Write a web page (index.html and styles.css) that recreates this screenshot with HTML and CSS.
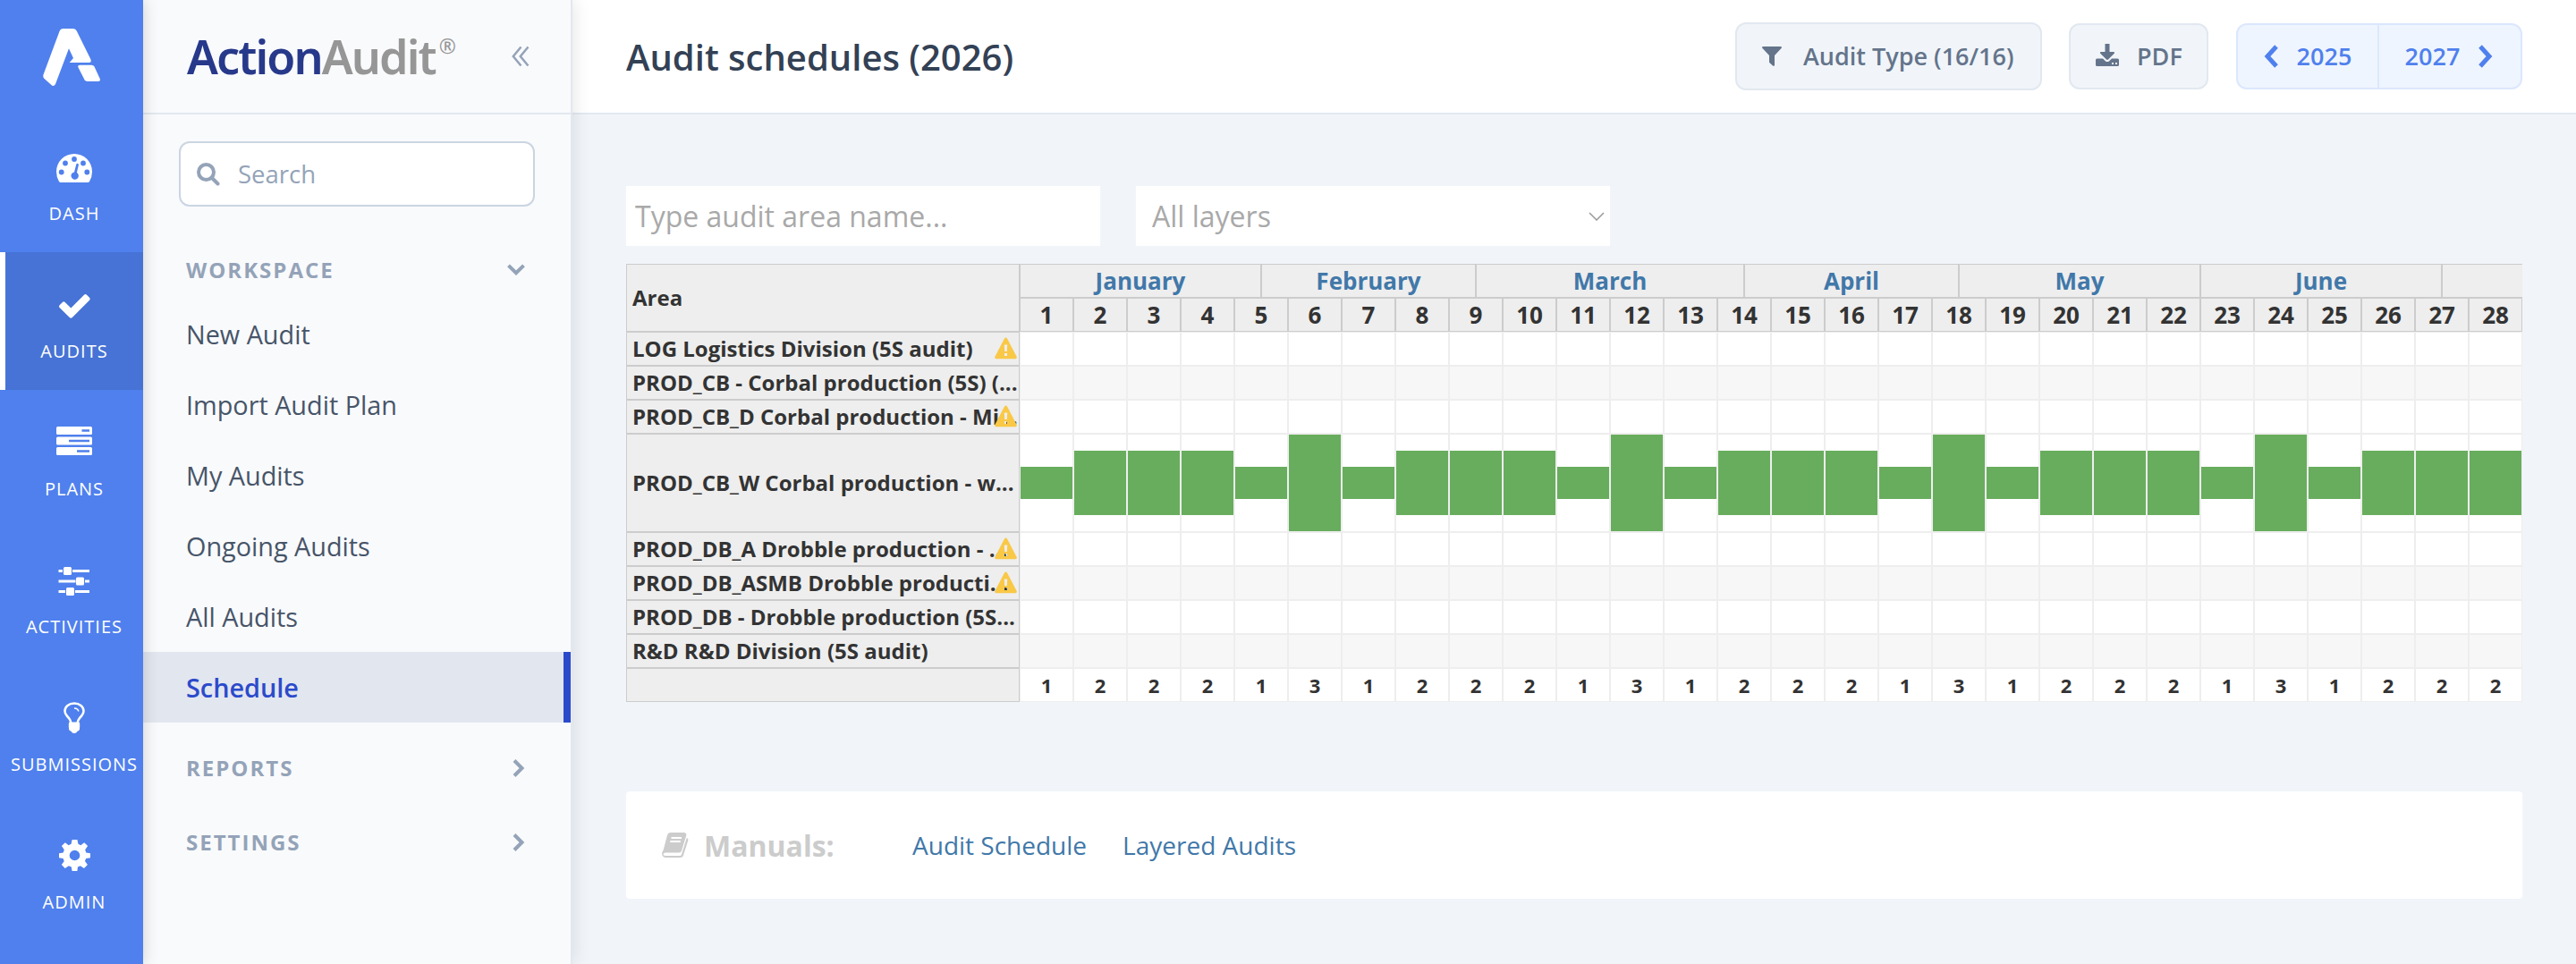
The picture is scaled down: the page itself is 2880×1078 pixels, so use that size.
FILE: index.html
```html
<!DOCTYPE html>
<html lang="en">
<head>
  <meta charset="UTF-8">
  <meta name="viewport" content="width=device-width, initial-scale=1.0">
  <title>Audit schedules (2026)</title>
  <link rel="stylesheet" href="styles.css">
</head>
<body>
  <nav class="rail">
    <a class="rail-logo" href="#">
      <svg width="64" height="66" viewBox="0 0 64 66" fill="#fff"><path d="M18.700 3.500Q19.700 1 22 1H34Q36.500 1 37.700 3.500L53.500 35.500Q54.500 39 51.500 39H29.700L34 34 29 23.300 14 63Q12.500 66 10 64.500L1 56.500Q0 55 .3 53z"/><path d="M41 41.700H54.500Q56.500 41.700 57.500 43.500L63.700 57Q64.500 60 61.500 60H49.500Q47.500 60 46.500 58.200L39.300 44Q38.800 41.700 41 41.700z"/></svg>
    </a>
    <a class="rail-item" href="#">
      <svg width="40" height="32" viewBox="0 0 40 32"><path fill="#fff" d="M20 0a20 20 0 0 1 20 20q0 6-3 11-.6 1-1.700 1H4.700q-1.100 0-1.700-1-3-5-3-11A20 20 0 0 1 20 0z"/><g fill="#4f80ed"><circle cx="20" cy="6" r="2.900"/><circle cx="10" cy="10.500" r="2.900"/><circle cx="30" cy="10.500" r="2.900"/><circle cx="5.700" cy="20.500" r="2.900"/><circle cx="34.300" cy="20.500" r="2.900"/><path d="M23.500 10.800q1.600.2 1.400 1.700l-2 8.500a4.200 4.200 0 1 1-2.900-.6l2.200-8.500q.4-1.100 1.300-1.100z"/></g></svg>
      <span>DASH</span>
    </a>
    <a class="rail-item active" href="#">
      <svg width="35" height="27" viewBox="0 0 35 27"><path fill="#fff" d="M.6 12.200L3.900 8.900q1.400-1.200 2.800 0l6.600 6.500L28 .8q1.500-1.400 3 0l3 3q1.300 1.500 0 3L14.800 26q-1.500 1.300-3 0L.6 15q-1.200-1.400 0-2.800z"/></svg>
      <span>AUDITS</span>
    </a>
    <a class="rail-item plans" href="#">
      <svg width="40" height="32" viewBox="0 0 40 32"><g fill="#fff"><rect width="40" height="9" rx="1.500"/><rect y="11.500" width="40" height="9" rx="1.500"/><rect y="23" width="40" height="9" rx="1.500"/></g><path fill="#4f80ed" d="M28.500 3.300H37v2.400h-8.500zM14 14.800h23v2.400H14zM23 26.300h14v2.400H23z"/></svg>
      <span>PLANS</span>
    </a>
    <a class="rail-item" href="#">
      <svg width="36" height="32" viewBox="0 0 36 32"><g fill="#fff"><path d="M.5 3H5v3H.5zM16 3h19v3H16zM.5 14.500h19v3H.5zM30 14.500h5v3h-5zM.5 26H8v3H.5zM19 26h16v3H19z"/><rect x="6" width="9" height="9" rx="1.500"/><rect x="20" y="11.500" width="9" height="9" rx="1.500"/><rect x="9" y="23" width="9" height="9" rx="1.500"/></g></svg>
      <span>ACTIVITIES</span>
    </a>
    <a class="rail-item raised" href="#">
      <svg width="24" height="36" viewBox="0 0 24 36"><path fill="none" stroke="#fff" stroke-width="2.500" d="M8.500 23.500Q8.300 21 6 18 1.500 13.500 1.500 10C1.500 5 6 1.600 12 1.600S22.500 5 22.500 10Q22.500 13.500 18 18q-2.300 3-2.500 5.500"/><path fill="none" stroke="#fff" stroke-width="1.500" d="M12 7q4.300.2 4.800 3.500"/><path fill="#fff" d="M6.500 22.500h11q1 .8.500 1.800.7 1.200 0 2.200.7 1 0 2.200v1.800q-.5 1.800-2.500 2.300-1 2.200-3.500 2.200t-3.500-2.200q-2-.5-2.500-2.300v-1.800q-.7-1.200 0-2.200-.7-1 0-2.200-.5-1 .5-1.800z"/></svg>
      <span>SUBMISSIONS</span>
    </a>
    <a class="rail-item raised" href="#">
      <svg width="35" height="35" viewBox="0 0 36 36"><path fill="#fff" fill-rule="evenodd" d="M15 0h6l1 5 3 1.300 4-3 4 4-3 4.300L31.200 15l4.800.7v5.200l-5 .8-1.200 3.100 3 4-4 4.200-4.300-3-3 1.300L21 36h-6l-.8-4.700-3-1.300-4.300 3-4-4.200 3-4L4.700 21.700 0 20.900v-5.200l4.800-.7L6 11.600l-3-4.300 4-4 4 3L14 5zM18 12a6 6 0 1 0 0 12 6 6 0 0 0 0-12z"/></svg>
      <span>ADMIN</span>
    </a>
  </nav>

  <aside class="sidebar">
    <div class="brand">
      <div class="brand-name"><span class="brand-action">Action</span><span class="brand-audit">Audit</span><sup>®</sup></div>
      <svg width="20" height="24" viewBox="0 0 20 24" fill="none" stroke="#94a3b8" stroke-width="2.500"><path d="M10.500 1.500L1.800 12l8.700 10.500M18.500 1.500L9.800 12l8.700 10.500"/></svg>
    </div>
    <div class="search">
      <svg width="26" height="26" viewBox="0 0 26 26" fill="none" stroke="#94a3b8" stroke-width="4"><circle cx="10.500" cy="10.500" r="8.500"/><path stroke-linecap="round" d="M17 17l6.500 6.500"/></svg>
      <input type="text" placeholder="Search">
    </div>
    <div class="group workspace">WORKSPACE
      <svg width="20" height="13" viewBox="0 0 20 13" fill="none" stroke="#94a3b8" stroke-width="4"><path d="M1.500 1.800L10 10.200l8.500-8.400"/></svg>
    </div>
    <a class="menu-item" href="#">New Audit</a>
    <a class="menu-item" href="#">Import Audit Plan</a>
    <a class="menu-item" href="#">My Audits</a>
    <a class="menu-item" href="#">Ongoing Audits</a>
    <a class="menu-item" href="#">All Audits</a>
    <a class="menu-item selected" href="#">Schedule</a>
    <div class="group reports">REPORTS
      <svg width="14" height="20" viewBox="0 0 14 20" fill="none" stroke="#94a3b8" stroke-width="4"><path d="M2 1.500l8.500 8.500L2 18.500"/></svg>
    </div>
    <div class="group">SETTINGS
      <svg width="14" height="20" viewBox="0 0 14 20" fill="none" stroke="#94a3b8" stroke-width="4"><path d="M2 1.500l8.500 8.500L2 18.500"/></svg>
    </div>
  </aside>

  <main class="main">
    <header class="topbar">
      <h1>Audit schedules (2026)</h1>
      <button class="btn btn-type">
        <svg width="22" height="22" viewBox="0 0 22 22" fill="#64748b"><path d="M.8 0h20.400q1.300.8.300 2L14 10v11q-.6 1.400-2 .5l-3.500-3.300q-.5-.5-.5-1.200v-7L.5 2Q-.5.800.8 0z"/></svg>
        <span>Audit Type (16/16)</span>
      </button>
      <button class="btn btn-pdf">
        <svg width="26" height="25" viewBox="0 0 26 25" fill="#64748b"><path d="M10.500 0h5v9h5q1 .8.300 1.800L14 17.500q-1 .8-2 0l-6.800-6.700Q4.500 9.800 5.500 9h5z"/><path fill-rule="evenodd" d="M1.500 16.500H8l2.800 2.700q2.200 1.800 4.400 0l2.800-2.700h6.500q1.500 0 1.500 1.500v5.500q0 1.500-1.500 1.500h-23Q0 25 0 23.500V18q0-1.500 1.500-1.500zM18 21v2h2v-2zM22 21v2h2v-2z"/></svg>
        <span>PDF</span>
      </button>
      <div class="years">
        <a href="#"><svg width="17" height="26" viewBox="0 0 17 26" fill="none" stroke="#4f80ed" stroke-width="5"><path d="M14 2L4 13l10 11"/></svg><span>2025</span></a>
        <a href="#"><span>2027</span><svg width="17" height="26" viewBox="0 0 17 26" fill="none" stroke="#4f80ed" stroke-width="5"><path d="M3 2l10 11L3 24"/></svg></a>
      </div>
    </header>

    <section class="content">
      <div class="filters">
        <input class="area-filter" type="text" placeholder="Type audit area name...">
        <div class="layer-filter"><span>All layers</span>
          <svg width="18" height="10" viewBox="0 0 18 10" fill="none" stroke="#999" stroke-width="1.500"><path d="M1 1l8 8 8-8"/></svg>
        </div>
      </div>

      <div class="schedule">
        <div class="areas">
          <div class="area area-head">Area</div>
          <div class="area warn">LOG Logistics Division (5S audit)</div>
          <div class="area">PROD_CB - Corbal production (5S) (...</div>
          <div class="area warn">PROD_CB_D Corbal production - Mi...</div>
          <div class="area tall">PROD_CB_W Corbal production - w...</div>
          <div class="area warn">PROD_DB_A Drobble production - ...</div>
          <div class="area warn">PROD_DB_ASMB Drobble producti...</div>
          <div class="area">PROD_DB - Drobble production (5S...</div>
          <div class="area">R&amp;D R&amp;D Division (5S audit)</div>
          <div class="area"></div>
        </div>
        <div class="calendar">
          <div class="months">
            <div class="m45">January</div>
            <div class="m40">February</div>
            <div class="m50">March</div>
            <div class="m40">April</div>
            <div class="m45">May</div>
            <div class="m45">June</div>
            <div class="m50"></div>
          </div>
          <div id="weeks"></div>
        </div>
      </div>

      <div class="manuals">
        <svg width="30" height="28" viewBox="0 0 30 28"><path fill="#ccc" d="M9.500 0H25q3 .3 2.200 3.500L22 20.500q-.7 2-3 2H4q-2 .3-2.500 1.500-.3 2 2.500 2h16q1.500 0 2-1.500L27.800 6q2 .8 1.500 2.800L24 25.500q-.9 2.500-3.500 2.500H4q-3.500-.5-4-4 .3-3 1.500-4L6 3q.8-2.800 3.500-3z"/><path stroke="#fff" stroke-width="1.800" d="M10.500 6h11.500M9.300 10h11.500"/></svg>
        <strong>Manuals:</strong>
        <a href="#">Audit Schedule</a>
        <a href="#">Layered Audits</a>
      </div>
    </section>
  </main>

  <script src="script.js"></script>
</body>
</html>
```
FILE: styles.css
```css
* {
  box-sizing: border-box;
}

body {
  margin: 0;
  display: flex;
  height: 1078px;
  overflow: hidden;
  background-color: #f1f5fa;
  color: #333333;
  font-family: 'Open Sans', 'Noto Sans', sans-serif;
}

a {
  text-decoration: none;
}

svg {
  display: block;
  flex: none;
}

/* Left rail */
.rail {
  width: 160px;
  flex: none;
  background-color: #4f80ed;
  box-shadow: 0 0 16px rgba(0, 0, 0, 0.18);
  z-index: 2;
}

.rail-logo {
  display: block;
  height: 128px;
  padding: 31px 0 0 48px;
}

.rail-item {
  height: 154px;
  display: grid;
  grid-template-rows: 40px 28px;
  row-gap: 17px;
  padding-top: 40px;
  place-items: center;
  align-content: start;
  border-left: 6px solid transparent;
  color: #ffffff;
  font-size: 20px;
  line-height: 28px;
  letter-spacing: 1px;
}

.rail-item.active {
  background-color: #4673d5;
  border-left-color: #ffffff;
}

.plans svg {
  margin-bottom: 6px;
}

.raised svg {
  margin-bottom: 3px;
}

/* Sidebar */
.sidebar {
  width: 480px;
  flex: none;
  background-color: #f9fafc;
  border-right: 2px solid #e2e8f0;
  box-shadow: 0 0 20px rgba(0, 0, 0, 0.12);
  z-index: 1;
}

.brand {
  height: 128px;
  display: flex;
  align-items: center;
  justify-content: space-between;
  padding: 0 46px 0 49px;
  border-bottom: 2px solid #e2e8f0;
}

.brand-name {
  display: flex;
  font-family: 'Noto Sans', 'Open Sans', sans-serif;
  font-size: 52px;
  font-weight: 600;
  letter-spacing: -1.9px;
  line-height: 60px;
  white-space: nowrap;
}

.brand-action {
  color: #27398a;
}

.brand-audit {
  color: #969696;
}

.brand-name sup {
  margin-left: 4px;
  color: #969696;
  font-size: 23px;
  font-weight: 400;
  line-height: 36px;
  letter-spacing: 0;
}

.search {
  margin: 30px 40px 38px;
  height: 73px;
  display: flex;
  align-items: center;
  gap: 20px;
  padding-left: 18px;
  background-color: #ffffff;
  border: 2px solid #cbd5e1;
  border-radius: 12px;
}

.search input {
  width: 300px;
  border: none;
  padding: 0 0 1px;
  font: 27.5px 'Open Sans', sans-serif;
}

input:focus {
  outline: none;
}

.search input::placeholder {
  color: #94a3b8;
}

.group {
  height: 83px;
  display: flex;
  align-items: center;
  justify-content: space-between;
  padding: 0 51px 0 48px;
  color: #94a3b8;
  font-size: 24px;
  font-weight: 700;
  letter-spacing: 2px;
}

.workspace {
  height: 65px;
}

.reports {
  margin-top: 9px;
}

.menu-item {
  display: block;
  height: 79px;
  padding-left: 48px;
  color: #475569;
  font-size: 28.8px;
  line-height: 79px;
}

.menu-item.selected {
  background-color: #e2e6ef;
  border-right: 8px solid #2b4acb;
  color: #2b4acb;
  font-weight: 600;
}

/* Top bar */
.main {
  flex: 1;
  min-width: 0;
}

.topbar {
  height: 128px;
  display: flex;
  align-items: center;
  padding: 0 60px;
  background-color: #ffffff;
  border-bottom: 2px solid #e2e8f0;
}

.topbar h1 {
  margin: 0 auto 0 0;
  color: #334155;
  font-size: 40px;
  font-weight: 600;
}

.btn {
  display: flex;
  align-items: center;
  background-color: #f1f5f9;
  border: 2px solid #e2e8f0;
  border-radius: 12px;
  padding: 0 28px;
  color: #64748b;
  font: 600 27px 'Open Sans', sans-serif;
}

.btn span,
.years span {
  padding-bottom: 2px;
}

.btn-type {
  width: 343px;
  height: 76px;
  gap: 24px;
  margin-right: 30px;
}

.btn-pdf {
  width: 156px;
  height: 74px;
  gap: 20px;
  margin-right: 31px;
}

.btn-pdf svg {
  margin-bottom: 4px;
}

.years {
  display: flex;
  width: 320px;
  height: 74px;
  background-color: #eff5fe;
  border: 2px solid #dbe7fd;
  border-radius: 12px;
}

.years a {
  flex: 1;
  display: flex;
  align-items: center;
  justify-content: center;
  gap: 20px;
  color: #4f80ed;
  font-size: 27px;
  font-weight: 600;
}

.years a + a {
  border-left: 2px solid #dbe7fd;
  padding-right: 2px;
}

/* Filters */
.content {
  padding: 80px 60px 0;
}

.filters {
  display: flex;
  gap: 40px;
  margin-bottom: 20px;
}

.area-filter,
.layer-filter {
  width: 530px;
  height: 67px;
  border: none;
  background-color: #ffffff;
  color: #a9a9a9;
  font: 32px 'Open Sans', sans-serif;
}

.area-filter {
  padding: 0 10px;
}

.area-filter::placeholder {
  color: #a9a9a9;
}

.layer-filter {
  display: flex;
  align-items: center;
  justify-content: space-between;
  padding: 0 6px 0 18px;
}

/* Schedule */
.schedule {
  display: flex;
  width: 2120px;
}

.areas {
  width: 440px;
  flex: none;
}

.area {
  position: relative;
  height: 38px;
  display: flex;
  align-items: center;
  padding: 0 0 2px 6px;
  background-color: #eeeeee;
  border: 1px solid #cccccc;
  font-size: 24px;
  font-weight: 700;
  white-space: nowrap;
}

.area-head {
  height: 76px;
}

.tall {
  height: 110px;
}

.warning {
  position: absolute;
  right: 2px;
  top: 5px;
}

.calendar {
  width: 1680px;
  overflow: hidden;
}

.months {
  display: flex;
}

.months div {
  flex: none;
  height: 38px;
  background-color: #eeeeee;
  border: 1px solid #cccccc;
  color: #4178a9;
  font-size: 26px;
  font-weight: 700;
  line-height: 36px;
  text-align: center;
}

.months .m40 {
  width: 240px;
}

.months .m45 {
  width: 270px;
}

.months .m50 {
  width: 300px;
}

.row {
  display: grid;
  grid-template-columns: repeat(28, 60px);
}

.cell {
  height: 38px;
  display: flex;
  align-items: center;
  justify-content: center;
  background-color: #ffffff;
  border: 1px solid #eeeeee;
  font-size: 22px;
  font-weight: 700;
}

.head .cell {
  background-color: #eeeeee;
  border-color: #cccccc;
  font-size: 26px;
}

.odd .cell {
  background-color: #f7f7f7;
}

.tall .cell {
  height: 110px;
}

.bar {
  width: 58px;
  background-color: #68ad5d;
}

/* Manuals */
.manuals {
  display: flex;
  align-items: center;
  width: 2120px;
  height: 120px;
  margin-top: 100px;
  padding-left: 40px;
  background-color: #ffffff;
  border-radius: 4px;
}

.manuals strong {
  width: 233px;
  margin-left: 17px;
  color: #cccccc;
  font-size: 32px;
}

.manuals a {
  margin-right: 40px;
  color: #4178a9;
  font-size: 28px;
}
```
FILE: script.js
```js
// Number of audits in each week
const counts = [1, 2, 2, 2, 1, 3, 1, 2, 2, 2, 1, 3, 1, 2, 2, 2, 1, 3, 1, 2, 2, 2, 1, 3, 1, 2, 2, 2];
const weeks = document.getElementById('weeks');

// Add one row of cells, fill is called for every cell
function addRow(className, fill) {
  const row = document.createElement('div');
  row.className = 'row ' + className;
  counts.forEach(function (count, i) {
    const cell = document.createElement('div');
    cell.className = 'cell';
    if (fill) fill(cell, count, i);
    row.appendChild(cell);
  });
  weeks.appendChild(row);
}

addRow('head', function (cell, count, i) {
  cell.textContent = i + 1;
});
addRow('');
addRow('odd');
addRow('');
addRow('tall', function (cell, count) {
  const bar = document.createElement('div');
  bar.className = 'bar';
  bar.style.height = count * 36 + 'px';
  cell.appendChild(bar);
});
addRow('');
addRow('odd');
addRow('');
addRow('odd');
addRow('', function (cell, count) {
  cell.textContent = count;
});

// Warning sign over the end of the area name
document.querySelectorAll('.warn').forEach(function (area) {
  area.insertAdjacentHTML('beforeend',
    '<svg class="warning" width="25" height="25" viewBox="0 0 25 24"><path fill="#f9c846" fill-rule="evenodd" d="M11 1q1.500-2 3 0l10.700 20.500q.6 2-1.400 2.200H1.700Q-.3 23.500.3 21.500zM10.800 8l.4 7.500h2.600l.4-7.500zM11 17.500v3h3v-3z"/></svg>');
});
```
